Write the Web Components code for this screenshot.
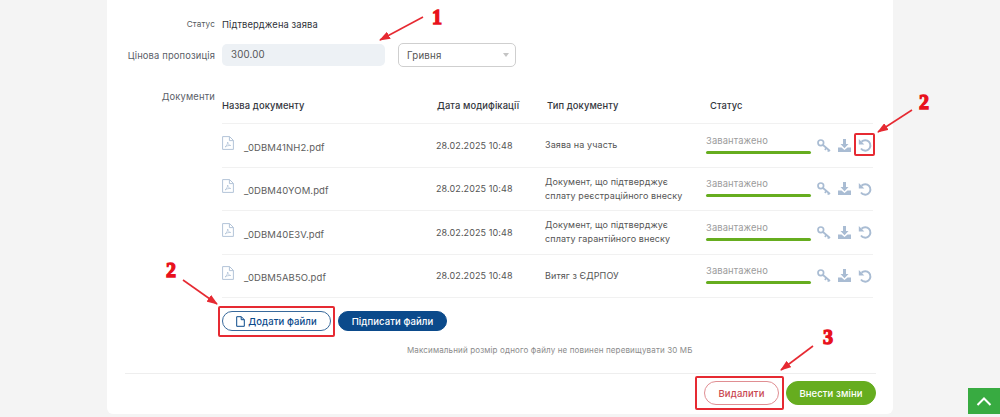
<!DOCTYPE html>
<html><head><meta charset="utf-8"><style>
html,body{margin:0;padding:0}
body{background:#f4f4f4;font-family:Inter,"Open Sans",sans-serif;width:1000px;height:417px;overflow:hidden}
</style></head><body>
<x-page>
  <x-field label="Статус" small h="20" style="margin-bottom:9px"><x-value>Підтверджена заява</x-value></x-field>
  <x-field label="Цінова пропозиція" h="24"><x-price value="300.00" currency="Гривня"></x-price></x-field>
  <x-docs>
    <x-doc name="_0DBM41NH2.pdf" type="Заява на участь"></x-doc>
    <x-doc name="_0DBM40YOM.pdf" type="Документ, що підтверджує сплату реєстраційного внеску"></x-doc>
    <x-doc name="_0DBM40E3V.pdf" type="Документ, що підтверджує сплату гарантійного внеску"></x-doc>
    <x-doc name="_0DBM5AB5O.pdf" type="Витяг з ЄДРПОУ"></x-doc>
  </x-docs>
  <x-footer></x-footer>
</x-page>
<x-top></x-top>
<x-marks></x-marks>
<script>
const def=(n,html)=>customElements.define(n,class extends HTMLElement{connectedCallback(){if(this.shadowRoot)return;const s=this.attachShadow({mode:'open'});s.innerHTML=typeof html==='function'?html(this):html;}});
def('x-page',`<style>:host{display:block;width:786px;height:414px;margin-left:107px;background:#fff;border-radius:0 0 6px 6px;box-sizing:border-box;padding-top:14px}</style><slot></slot>`);
def('x-value',`<style>:host{display:block;color:#30333a;font-size:9.4px;letter-spacing:.1px}</style><slot></slot>`);
def('x-field',e=>`<style>:host{display:grid;grid-template-columns:108px 1fr;column-gap:7px;align-items:center;height:${e.getAttribute('h')}px}
.l{text-align:right;color:${e.hasAttribute('small')?'#555a60':'#5a6068'};font-size:${e.hasAttribute('small')?'8.2':'9.4'}px;letter-spacing:.15px;white-space:nowrap}</style><div class="l">${e.getAttribute('label')}</div><div><slot></slot></div>`);
def('x-price',e=>`<style>:host{display:flex;align-items:center;gap:13px}
.i{width:163px;height:22px;background:#edf1f5;border-radius:5px;color:#555;font-size:9.7px;line-height:22px;padding-left:9px;box-sizing:border-box;letter-spacing:.2px}
.s{width:118px;height:24px;border:1px solid #cfcfcf;border-radius:5px;box-sizing:border-box;font-size:9.7px;color:#555;display:flex;align-items:center;justify-content:space-between;padding:0 6px 0 8px;letter-spacing:.2px}
.s i{border:3px solid transparent;border-top:4px solid #c4c4c4;border-bottom:0}</style>
<div class="i">${e.getAttribute('value')}</div><div class="s">${e.getAttribute('currency')}<i></i></div>`);
def('x-docs',`<style>:host{display:grid;grid-template-columns:108px 651px;column-gap:7px;margin-top:18px}
.l{text-align:right;color:#5a6068;font-size:9.4px;letter-spacing:.15px;margin-top:6px;line-height:12px}
.h{display:grid;grid-template-columns:215px 110px 163px 1fr;height:39px;align-items:center;font-size:9.4px;font-weight:500;color:#33363d;letter-spacing:.1px;border-bottom:1px solid #f1f1f1;box-sizing:border-box;padding-top:2px}
.b{display:flex;gap:7px;margin-top:13px}
.n{margin:14px 0 0 185px;font-size:8px;color:#8b8b8b;letter-spacing:.14px;white-space:nowrap;line-height:10px}</style>
<div class="l">Документи</div><div>
<div class="h"><span>Назва документу</span><span>Дата модифікації</span><span>Тип документу</span><span>Статус</span></div>
<slot></slot>
<div class="b"><x-btn kind="blue" w="109"><svg slot="icon" width="9" height="11" viewBox="0 0 9 11" fill="none" stroke="#0b4a8b" stroke-width="1"><path d="M.7.7h4.6l3 3v6.600H.7zM5.200.7v3h3"/></svg>Додати файли</x-btn><x-btn kind="navy" w="109">Підписати файли</x-btn></div>
<div class="n">Максимальний розмір одного файлу не повинен перевищувати 30 МБ</div></div>`);
def('x-doc',e=>`<style>:host{display:grid;grid-template-columns:214px 109px 161px 111px 1fr;height:43.5px;align-items:center;border-bottom:1px solid #f1f1f1;box-sizing:border-box;font-size:9px;color:#555;letter-spacing:.1px}
.n{display:flex;align-items:center;gap:10px;font-size:9.500px;color:#5d5d5d}
.n svg{margin-top:-5px}.n span{margin-top:4px}
.t{line-height:14px;max-width:145px}
.s{color:#9b9b9b;font-size:9.400px;margin-top:-2px}.s i{display:block;height:3px;background:#66ad1f;border-radius:2px;margin-top:5px;width:105px}
.a{display:flex;gap:7px;align-items:center}</style>
<div class="n"><svg width="12" height="14" viewBox="0 0 12 14" fill="none" stroke="#b3c4d8" stroke-width="1"><path d="M.6.6h7l3.800 3.800v9H.6zM7.400.6v4h4"/><path d="M3 11c1.500-1 2.600-3 2.700-5 .2 2 1 3 3 3.500-2-.2-4 .4-5.700 1.500z" stroke-width=".8"/></svg><span>${e.getAttribute('name')}</span></div>
<div class="d">28.02.2025 10:48</div><div class="t">${e.getAttribute('type')}</div>
<div class="s">Завантажено<i></i></div>
<div class="a"><svg width="14" height="13" viewBox="0 0 14 13" fill="none" stroke="#a9bcd3" stroke-width="1.700"><circle cx="3.800" cy="3.800" r="2.800"/><path d="M6 6l7 6M9.500 9l-1.700 1.800M12 11.200l-1.300 1.300"/></svg>
<svg width="13" height="13" viewBox="0 0 13 13" fill="#a9bcd3"><path d="M5 0h3v5h2.500L6.500 9.200 2.500 5H5zM0 8.500h3.500l3 2.500 3-2.500H13V13H0z"/></svg>
<svg width="14" height="14" viewBox="0 0 14 14" fill="none" stroke="#a9bcd3" stroke-width="2"><path d="M3.500 3.800A5.200 5.200 0 1 1 3 10.500"/><path d="M.8 1v5.500h5.500z" fill="#a9bcd3" stroke="none"/></svg></div>`);
def('x-btn',e=>{const k=e.getAttribute('kind');const m={blue:'#fff;color:#0b4a8b;border:1px solid #38699b',navy:'#0b4a8b;color:#fff;border:1px solid #0b4a8b',red:'#fff;color:#c9474f;border:1px solid #e08e92',green:'#66ad1f;color:#fff;border:1px solid #66ad1f'}[k];
return `<style>:host{display:inline-flex}div{background:${m};box-sizing:border-box;width:${e.getAttribute('w')}px;height:${e.getAttribute('h')||20}px;border-radius:13px;display:flex;align-items:center;justify-content:center;gap:3px;font-size:9.5px;font-weight:500;letter-spacing:.1px;white-space:nowrap}</style><div><slot name="icon"></slot><slot></slot></div>`});
def('x-footer',`<style>:host{display:flex;justify-content:flex-end;gap:7px;margin:18px 17px 0 18px;border-top:1px solid #eee;padding-top:7px}</style>
<x-btn kind="red" w="75" h="24">Видалити</x-btn><x-btn kind="green" w="90" h="24">Внести зміни</x-btn>`);
def('x-top',`<style>:host{position:absolute;left:968px;top:388px;width:32px;height:26px;background:#38ab41;display:flex;align-items:center;justify-content:center}</style><svg width="16" height="9" viewBox="0 0 16 9" fill="none" stroke="#fff" stroke-width="2"><path d="M1.500 8L8 1.500 14.500 8"/></svg>`);
def('x-marks',`<style>:host{position:absolute;left:0;top:0}svg{display:block}text{font:bold 20px "Liberation Serif",serif;fill:#e8111c;stroke:#e8111c;stroke-width:1.300}rect{fill:none;stroke:#e62a32;stroke-width:2}</style>
<svg width="1000" height="417" viewBox="0 0 1000 417"><defs><marker id="a" markerWidth="12" markerHeight="8" refX="10" refY="4" orient="auto" markerUnits="userSpaceOnUse"><path d="M0 0L11 4L0 8z" fill="#e62a32"/></marker></defs>
<g stroke="#e62a32" stroke-width="1.600"><path d="M423 17L380 40" marker-end="url(#a)"/><path d="M912 110L878 132" marker-end="url(#a)"/><path d="M183 280L217 304" marker-end="url(#a)"/><path d="M813 346L781 370" marker-end="url(#a)"/></g>
<rect x="855" y="134" width="19" height="21" rx="1"/><rect x="219" y="307" width="115" height="29" rx="1"/><rect x="696" y="377" width="87" height="32" rx="1"/>
<text x="432" y="24">1</text><text x="919" y="109">2</text><text x="166" y="277">2</text><text x="823" y="344">3</text></svg>`);
</script>
</body></html>
